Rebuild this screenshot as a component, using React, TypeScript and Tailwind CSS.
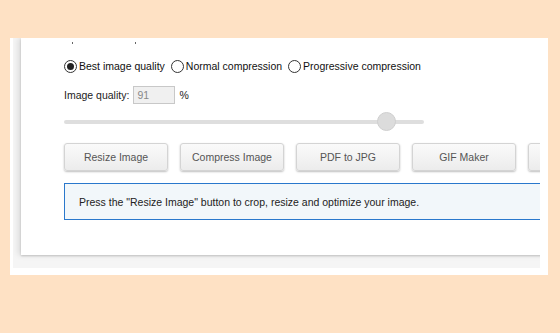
import React from "react";

function Radio({ checked, label }: { checked?: boolean; label: string }) {
  return (
    <div className="flex items-center">
      {checked ? (
        <span className="flex h-[13px] w-[13px] items-center justify-center rounded-full border-[1.5px] border-[#333] bg-white">
          <span className="h-[7px] w-[7px] rounded-full bg-[#222]" />
        </span>
      ) : (
        <span className="h-[13px] w-[13px] rounded-full border border-[#333] bg-white" />
      )}
      <span className="ml-[2px] text-[#111]">{label}</span>
    </div>
  );
}

function Btn({ label }: { label: string }) {
  return (
    <div className="flex h-[28px] w-[104px] shrink-0 items-center justify-center rounded-[3px] border border-[#d4d4d4] bg-gradient-to-b from-[#fafafa] to-[#ececec] text-[#555] shadow-[0_1px_2px_rgba(0,0,0,0.25)]">
      {label}
    </div>
  );
}

export default function App() {
  return (
    <div
      className="h-[333px] w-[560px] bg-[#fee1c4] pl-[10px] pt-[38px]"
      style={{ fontFamily: '"Liberation Sans", Arial, sans-serif' }}
    >
      <div className="h-[237px] w-[538px] bg-white pb-[7px] pl-[3px] pr-[8px]">
        <div className="h-[230px] w-[527px] overflow-hidden bg-[#f5f5f5]">
          <div className="ml-[8px] h-[217px] w-[620px] bg-white pl-[43px] text-[10.5px] leading-[14px] shadow-[-3px_0_6px_rgba(0,0,0,0.10),0_1px_2px_rgba(0,0,0,0.18)]">
            <div className="flex h-[21px] items-start pt-[4px]">
              <span className="ml-[8px] h-[2px] w-[1px] bg-[#666]" />
              <span className="ml-[62px] h-[2px] w-[1px] bg-[#666]" />
            </div>
            <div className="flex h-[14px] items-center gap-[6px]">
              <Radio checked label="Best image quality" />
              <Radio label="Normal compression" />
              <Radio label="Progressive compression" />
            </div>
            <div className="mt-[13px] flex h-[18px] items-center text-[#222]">
              <span>Image quality:</span>
              <span className="ml-[4px] flex h-[18px] w-[42px] items-center border border-[#c8c8c8] bg-[#f0f0f0] pl-[3px] text-[#888]">
                91
              </span>
              <span className="ml-[4px]">%</span>
            </div>
            <div className="mt-[8px] flex h-[19px] w-[360px] items-center">
              <div className="relative h-[4px] w-[360px] rounded-full bg-[#dedede]">
                <span className="absolute left-[313px] top-[-8px] h-[19px] w-[19px] rounded-full border border-[#cfcfcf] bg-[#dcdcdc]" />
              </div>
            </div>
            <div className="mt-[12px] flex gap-[12px]">
              <Btn label="Resize Image" />
              <Btn label="Compress Image" />
              <Btn label="PDF to JPG" />
              <Btn label="GIF Maker" />
              <Btn label="" />
            </div>
            <div className="mt-[12px] flex h-[37px] w-[520px] items-center border border-[#2a78cc] bg-[#f2f7fa] pl-[14px] text-[#222]">
              Press the "Resize Image" button to crop, resize and optimize your image.
            </div>
          </div>
        </div>
      </div>
    </div>
  );
}
